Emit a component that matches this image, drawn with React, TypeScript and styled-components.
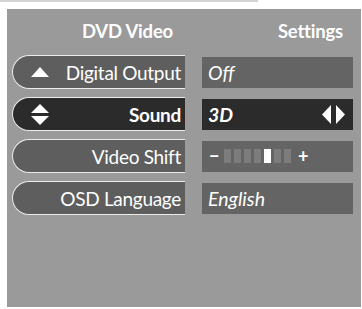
import React from "react";
import styled, { createGlobalStyle } from "styled-components";

const GlobalStyle = createGlobalStyle`
  html, body { margin: 0; padding: 0; background: #ffffff; }
  body { font-family: Lato, "Open Sans", "DejaVu Sans", sans-serif; }
`;

const Page = styled.div`
  width: 362px;
  height: 309px;
  overflow: hidden;
  background: #ffffff;
`;

const TopRule = styled.div`
  width: 258px;
  height: 2px;
  background: #d2d2d2;
`;

const Panel = styled.div`
  margin: 7px 0 0 7px;
  width: 354px;
  height: 298px;
  box-sizing: border-box;
  background: #9a9a9a;
  padding: 0 0 0 5px;
  color: #ffffff;
`;

const Header = styled.div`
  display: grid;
  grid-template-columns: 173px 151px;
  column-gap: 17px;
  height: 46px;
  box-sizing: border-box;
  padding-top: 11px;
`;

const HeaderCell = styled.div<{ $pad: number }>`
  text-align: right;
  padding-right: ${(p) => p.$pad}px;
  font-size: 18.5px;
  line-height: 22px;
  font-weight: 700;
  letter-spacing: -0.2px;
`;

const Rows = styled.div`
  display: flex;
  flex-direction: column;
  gap: 8px;
`;

const Row = styled.div`
  display: grid;
  grid-template-columns: 173px 151px 8px;
  column-gap: 17px;
  align-items: center;
  height: 34px;
`;

const Pill = styled.div<{ $active?: boolean }>`
  height: 34px;
  box-sizing: border-box;
  border: 1.5px solid #ececec;
  border-right: none;
  border-radius: 17px 0 0 17px;
  background: ${(p) => (p.$active ? "#2b2b2b" : "#5e5e5e")};
  display: flex;
  align-items: center;
  padding: 0 4px 0 17px;
  font-size: 19px;
  font-weight: ${(p) => (p.$active ? 700 : 400)};
  letter-spacing: -0.3px;
`;

const PillIcon = styled.div`
  width: 20px;
  height: 20px;
  display: flex;
  align-items: center;
  justify-content: center;
`;

const PillLabel = styled.span`
  flex: 1;
  text-align: right;
  white-space: nowrap;
`;

const Value = styled.div<{ $active?: boolean }>`
  height: 31px;
  box-sizing: border-box;
  background: ${(p) => (p.$active ? "#2b2b2b" : "#646464")};
  display: flex;
  align-items: center;
  padding: 0 7px 0 6px;
  font-size: 19.5px;
  font-style: italic;
  font-weight: ${(p) => (p.$active ? 700 : 400)};
`;

const ValueText = styled.span`
  flex: 1;
`;

const Slider = styled.div`
  display: flex;
  align-items: center;
  padding-left: 1px;
  font-style: normal;
  font-weight: 700;
`;

const Sign = styled.span<{ $w: number }>`
  width: ${(p) => p.$w}px;
  font-size: 18px;
  line-height: 20px;
`;

const Blocks = styled.div`
  display: flex;
  gap: 3px;
  margin: 0 7px 0 6px;
`;

const Block = styled.div<{ $on?: boolean }>`
  width: 7px;
  height: 14px;
  background: ${(p) => (p.$on ? "#ffffff" : "#7c7c7c")};
`;

const Dot = styled.div`
  width: 2px;
  height: 2px;
  background: #555;
  margin-left: 3px;
`;

const UpIcon = () => (
  <svg width="18" height="11" viewBox="0 0 18 11">
    <polygon points="0,10 9,0 18,10" fill="#fff" />
  </svg>
);

const UpDownIcon = () => (
  <svg width="18" height="21" viewBox="0 0 18 21">
    <polygon points="0,9 9,0 18,9" fill="#fff" />
    <polygon points="0,12 18,12 9,21" fill="#fff" />
  </svg>
);

const LeftRight = () => (
  <svg width="24" height="19" viewBox="0 0 24 19">
    <polygon points="0,9.5 9,0 9,19" fill="#fff" />
    <polygon points="14,0 23,9.5 14,19" fill="#fff" />
  </svg>
);

const items = [
  { label: "Digital Output", icon: <UpIcon />, value: "Off" },
  { label: "Sound", icon: <UpDownIcon />, value: "3D", active: true },
  { label: "Video Shift", slider: 4 },
  { label: "OSD Language", value: "English" },
];

export default function App() {
  return (
    <Page>
      <GlobalStyle />
      <TopRule />
      <Panel>
        <Header>
          <HeaderCell $pad={12}>DVD Video</HeaderCell>
          <HeaderCell $pad={10}>Settings</HeaderCell>
        </Header>
        <Rows>
          {items.map((it) => (
            <Row key={it.label}>
              <Pill $active={it.active}>
                <PillIcon>{it.icon}</PillIcon>
                <PillLabel>{it.label}</PillLabel>
              </Pill>
              <Value $active={it.active}>
                {it.slider !== undefined ? (
                  <Slider>
                    <Sign $w={9}>−</Sign>
                    <Blocks>
                      {Array.from({ length: 7 }).map((_, i) => (
                        <Block key={i} $on={i === it.slider} />
                      ))}
                    </Blocks>
                    <Sign $w={12}>+</Sign>
                  </Slider>
                ) : (
                  <ValueText>{it.value}</ValueText>
                )}
                {it.active && <LeftRight />}
              </Value>
              {it.slider !== undefined ? <Dot /> : <span />}
            </Row>
          ))}
        </Rows>
      </Panel>
    </Page>
  );
}
